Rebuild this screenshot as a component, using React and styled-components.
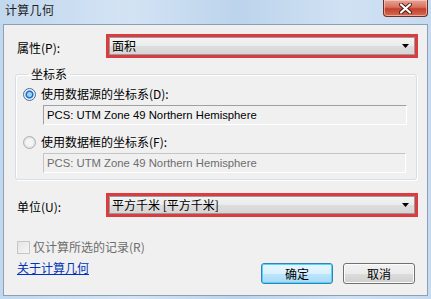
import React from "react";
import styled, { createGlobalStyle } from "styled-components";

const Global = createGlobalStyle`
  html, body { margin: 0; padding: 0; }
  body { font-family: "Noto Sans CJK SC", "Noto Sans", sans-serif; font-size: 12px; color: #000; }
  * { box-sizing: border-box; }
`;

const Window = styled.div`
  width: 431px;
  height: 299px;
  display: flex;
  flex-direction: column;
  background: linear-gradient(90deg, #c2d8ee 0%, #d3e3f4 30%, #bcd4ec 55%, #d0e1f3 80%, #c6dbf0 100%);
  overflow: hidden;
`;

const TitleBar = styled.div`
  height: 24px;
  display: flex;
  justify-content: space-between;
  align-items: flex-start;
`;

const Title = styled.div`
  padding: 2px 0 0 5px;
  font-size: 12px;
  line-height: 16px;
  color: #1e1e1e;
  letter-spacing: 0.3px;
`;

const CloseBtn = styled.div`
  width: 45px;
  height: 17px;
  margin-right: 3px;
  border: 1px solid #6e2f28;
  border-top: none;
  border-radius: 0 0 4px 4px;
  background: linear-gradient(180deg, #e9a597 0%, #d8715e 45%, #c2412c 55%, #d56a50 100%);
  box-shadow: inset 0 0 0 1px rgba(255, 220, 210, 0.55);
  display: flex;
  align-items: center;
  justify-content: center;
`;

const Client = styled.div`
  flex: 1;
  margin: 0 3px 3px 3px;
  border: 1px solid #8c9fb6;
  background: #f0f0f0;
  padding: 9px 9px 0 13px;
  display: flex;
  flex-direction: column;
`;

const FieldRow = styled.div`
  display: grid;
  grid-template-columns: 89px 1fr;
  align-items: center;
  margin-top: ${(p) => p.$mt || 0}px;
`;

const Label = styled.div`
  padding-top: 4px;
  line-height: 16px;
`;

const RedFrame = styled.div`
  height: 24px;
  border: 3px solid #dc3b40;
  display: flex;
`;

const Combo = styled.div`
  flex: 1;
  border: 1px solid #9a9a9a;
  background: linear-gradient(180deg, #f3f3f3 0%, #ebebeb 50%, #dddddd 51%, #d6d6d6 100%);
  display: flex;
  align-items: center;
  justify-content: space-between;
  padding: 0 5px 0 2px;
  line-height: 14px;
`;

const Group = styled.fieldset`
  margin: 9px 1px 0 -2px;
  padding: 0 0 6px 7px;
  border: 1px solid #d5dfe5;
  border-radius: 3px;
  box-shadow: inset 1px 1px 0 #fff, 1px 1px 0 #fff;
  min-width: 0;
`;

const Legend = styled.legend`
  padding: 0 3px;
  margin-left: 5px;
  line-height: 14px;
`;

const RadioRow = styled.label`
  display: flex;
  align-items: center;
  gap: 5px;
  margin-top: ${(p) => p.$mt}px;
  height: 16px;
  line-height: 16px;
`;

const Radio = styled.span`
  width: 13px;
  height: 13px;
  border-radius: 50%;
  border: 1px solid ${(p) => (p.$on ? "#4f6f91" : "#a9b0b8")};
  background: ${(p) => (p.$on ? "radial-gradient(circle, #9fd3fb 0 2px, #1e6cc4 3px 3.5px, #e6eef6 4.5px)" : "radial-gradient(circle, #f5f5f5 0 3px, #dadde2 6px)")};
  flex: none;
`;

const TextBox = styled.div`
  margin: ${(p) => p.$mt}px ${(p) => p.$mr}px 0 20px;
  height: 20px;
  border: 1px solid ${(p) => (p.$disabled ? "#c5c5c5" : "#a0a0a0")};
  border-right-color: #fff;
  border-bottom-color: #fff;
  padding: 0 3px;
  font-family: "Liberation Sans", Arial, sans-serif;
  font-size: 11.3px;
  line-height: 18px;
  color: ${(p) => (p.$disabled ? "#6d6d6d" : "#000")};
  white-space: nowrap;
  overflow: hidden;
`;

const CheckRow = styled.div`
  display: flex;
  align-items: center;
  gap: 3px;
  margin-top: 22px;
  color: #6d6d6d;
  line-height: 16px;
`;

const CheckBox = styled.span`
  width: 13px;
  height: 13px;
  border: 1px solid #c6c6c6;
  background: linear-gradient(135deg, #e4e4e4, #f6f6f6);
  flex: none;
`;

const Bottom = styled.div`
  display: flex;
  justify-content: space-between;
  align-items: flex-start;
  margin-top: 8px;
  padding-right: 3px;
`;

const Link = styled.a`
  color: #0033bb;
  text-decoration: underline;
  line-height: 14px;
  margin-top: -2px;
`;

const Buttons = styled.div`
  display: flex;
  gap: 10px;
`;

const Button = styled.button`
  width: 72px;
  height: 21px;
  font: inherit;
  font-size: 12px;
  color: #000;
  border-radius: 3px;
  padding: 0;
  border: 1px solid ${(p) => (p.$default ? "#3c7fb1" : "#707070")};
  background: ${(p) =>
    p.$default
      ? "linear-gradient(180deg, #eaf6fd 0%, #d9f0fc 50%, #bee6fd 51%, #a7d9f5 100%)"
      : "linear-gradient(180deg, #f2f2f2 0%, #ebebeb 50%, #dddddd 51%, #cfcfcf 100%)"};
  box-shadow: ${(p) => (p.$default ? "inset 0 0 0 1px #48d8fb" : "inset 0 0 0 1px #fcfcfc")};
`;

const Arrow = () => (
  <svg width="7" height="4" viewBox="0 0 7 4">
    <path d="M0 0H7L3.5 4Z" fill="#000" />
  </svg>
);

export default function App() {
  return (
    <>
      <Global />
      <Window>
        <TitleBar>
          <Title>计算几何</Title>
          <CloseBtn>
            <svg width="13" height="11" viewBox="0 0 13 11">
              <path d="M2 1.5L11 9.5M11 1.5L2 9.5" stroke="#4a1a14" strokeWidth="4" strokeLinecap="round" />
              <path d="M2 1.5L11 9.5M11 1.5L2 9.5" stroke="#fff" strokeWidth="2.2" strokeLinecap="round" />
            </svg>
          </CloseBtn>
        </TitleBar>
        <Client>
          <FieldRow>
            <Label>属性(P):</Label>
            <RedFrame>
              <Combo>
                <span>面积</span>
                <Arrow />
              </Combo>
            </RedFrame>
          </FieldRow>
          <Group>
            <Legend>坐标系</Legend>
            <RadioRow $mt={5}>
              <Radio $on />
              <span>使用数据源的坐标系(D):</span>
            </RadioRow>
            <TextBox $mt={3} $mr={9}>PCS: UTM Zone 49 Northern Hemisphere</TextBox>
            <RadioRow $mt={9}>
              <Radio />
              <span>使用数据框的坐标系(F):</span>
            </RadioRow>
            <TextBox $mt={3} $mr={10} $disabled>PCS: UTM Zone 49 Northern Hemisphere</TextBox>
          </Group>
          <FieldRow $mt={13}>
            <Label>单位(U):</Label>
            <RedFrame>
              <Combo>
                <span>平方千米 [平方千米]</span>
                <Arrow />
              </Combo>
            </RedFrame>
          </FieldRow>
          <CheckRow>
            <CheckBox />
            <span>仅计算所选的记录(R)</span>
          </CheckRow>
          <Bottom>
            <Link>关于计算几何</Link>
            <Buttons>
              <Button $default>确定</Button>
              <Button>取消</Button>
            </Buttons>
          </Bottom>
        </Client>
      </Window>
    </>
  );
}
